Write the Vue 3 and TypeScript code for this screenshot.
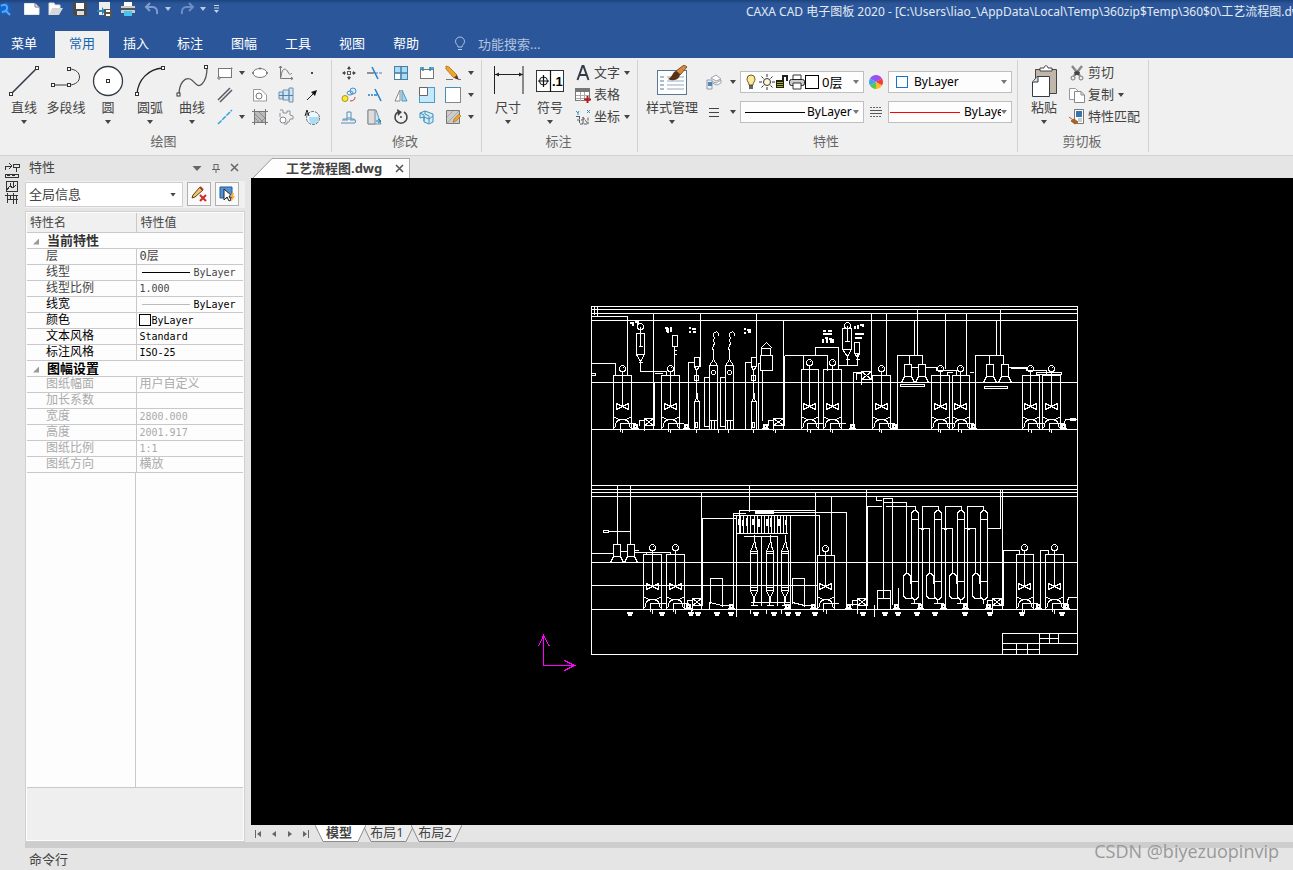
<script setup lang="ts">
import { ref } from 'vue'

interface Tool { icon: string; label: string; menu?: boolean }
interface Row { name: string; value: string; line?: string; swatch?: boolean; dark?: boolean }
interface Section { title: string; kind: string; rows: Row[] }

const menus = ['菜单', '常用', '插入', '标注', '图幅', '工具', '视图', '帮助']
const activeMenu = ref('常用')
const query = ref('')

const s = 'fill="none" stroke="#555b63"'
const b = 'fill="none" stroke="#4a90c8"'
const node = (x: number, y: number) =>
  `<rect x="${x - 1.5}" y="${y - 1.5}" width="3" height="3" fill="#fff" stroke="#333"/>`

const icons: Record<string, string> = {
  line: `<path d="M3 29 29 3" fill="none" stroke="#333b46" stroke-width="1.6"/>${node(3, 29)}${node(29, 3)}`,
  polyline: `<path d="M3 20h16M19 20c14 0 14-16 0-16" fill="none" stroke="#333b46"/>${node(3, 20)}${node(19, 20)}${node(19, 4)}`,
  circle: `<circle cx="16" cy="16" r="14.5" fill="#fff" stroke="#333b46" stroke-width="1.3"/>${node(16, 16)}`,
  arc: `<path d="M3 29C4 15 14 4 29 3" fill="none" stroke="#222" stroke-width="1.3"/>${node(3, 29)}${node(29, 3)}`,
  curve: `<path d="M3 30C3 18 9 12 14 14S21 24 26 19C29 16 31 10 31 3" fill="none" stroke="#555" stroke-width="1.3"/>${node(2.5, 29.5)}${node(30, 2)}`,
  rect: `<rect x="1.500" y="3.500" width="13" height="9" fill="#fff" stroke="#777"/><path d="M1 12h2v2H1zM14 3h1v1h-1z" fill="#fff" stroke="#777"/>`,
  ellipse: `<ellipse cx="8" cy="8" rx="7" ry="4.500" fill="#fff" stroke="#777"/><path d="M8 2.500v2M1 7v2M15 7v2" stroke="#555"/>`,
  func: `<path d="M2.500 1v12.500H15M1 3l1.500-2L4 3M13 12l2 1.500-2 1.500M3 12c1-10 5-9 7-5s3 2 4 1" fill="none" stroke="#777"/>`,
  dot: `<rect x="7" y="7" width="2" height="2" fill="#444"/>`,
  parallel: `<path d="M1 13 13 1M3 15 15 3" ${s} stroke-width="1.500"/>`,
  shape: `<path d="M1.500 14V2.500H9L14.500 8v6z" fill="#fff" stroke="#999"/><circle cx="7" cy="9" r="3" fill="none" stroke="#777"/>`,
  shaft: `<path d="M1 5h4v7H1zM5 3h6v10H5zM11 1h4v14h-4z" fill="#cfe5f4" stroke="#7390a8"/><path d="M1 8.500h14" stroke="#4b82b0"/>`,
  arrow: `<path d="M3 13 9 7" stroke="#222"/><path d="M13 3 11 9 7 5z" fill="#111"/>`,
  ray: `<path d="M1 15 15 1" stroke="#2fa3df" stroke-width="1.500" stroke-dasharray="5 1"/>`,
  hatch: `<rect x="3" y="3" width="10" height="10" fill="#bbb"/><path d="M0 2.500h16M0 13.500h16M2.500 0v16M13.500 0v16" fill="none" stroke="#777"/><path d="m3 5 8 8M3 9l4 4M7 3l6 6M9 13l4-4" stroke="#8c8c8c"/>`,
  gear: `<path d="M2 1h3v3h4V2h3v4l3 1v3h-3l-1 3H9v2H6M2 4v4" fill="none" stroke="#8b929a"/><circle cx="5" cy="11" r="3" fill="#fff" stroke="#888"/>`,
  region: `<circle cx="9" cy="9" r="6.500" fill="#eef7fb" stroke="#667" stroke-dasharray="3 1"/><path d="M5 8h10c0 5-3 7-6 7-3 0-4-3-4-7z" fill="#aadcf4"/><path d="M1 7 3 1l2 6M2 5h3" fill="none" stroke="#222"/>`,
  move: `<rect x="6.500" y="6.500" width="3" height="3" ${s}/><path d="M8 2v3M8 11v3M2 8h3M11 8h3" stroke="#444"/><path d="m6 4 2-3 2 3zM6 12l2 3 2-3zM4 6 1 8l3 2zM12 6l3 2-3 2z" fill="#444"/>`,
  trim: `<path d="M0 8h7" stroke="#333"/><path d="M8 8h8" stroke="#3b82cf" stroke-dasharray="3 1"/><path d="M5 2l6 12" stroke="#2183d0" stroke-width="1.500"/>`,
  array: `<rect x="1.500" y="1.500" width="13" height="13" fill="#a9dcf5" stroke="#4a7ea3"/><path d="M2 9h5v5H2z" fill="#fff"/><path d="M8 1v14M1 8h14" stroke="#4a7ea3" stroke-width="1.500"/>`,
  stretch: `<rect x="1.500" y="4.500" width="13" height="9" fill="#fff" stroke="#777"/><path d="M4 2v4M11 2v4M1 3h3M11 3h4" stroke="#258bcc" stroke-width="1.500"/>`,
  erase: `<path d="m1 1 3 1 8 8-3 3-8-9z" fill="#eda52c" stroke="#c37c20"/><path d="m9 13 3-3 2 5z" fill="#533"/><path d="M1 14.500h7M13 14.500h3" stroke="#777"/>`,
  copyobj: `<circle cx="4" cy="11.500" r="3" fill="#fce92c" stroke="#aa9420"/><circle cx="12" cy="4" r="3" fill="#d9eefa" stroke="#4a90c8"/><ellipse cx="9" cy="6" rx="3" ry="2" ${b}/><path d="M9 14q5 0 5-4" fill="none" stroke="#b44"/>`,
  extend: `<path d="M1 8h2M4 8h2M7 8h3" stroke="#2380c9" stroke-width="1.500"/><path d="m8 2 6 12" stroke="#2380c9" stroke-width="1.500"/>`,
  mirror: `<path d="M7 3v11H2z" fill="#fff" stroke="#888"/><path d="M9 3v11h5z" fill="#a6d6ed" stroke="#4b99c7"/>`,
  scale: `<rect x=".5" y=".5" width="15" height="15" fill="#c3e9fa" stroke="#4c9bc8"/><path d="M.500.500h8v8h-8z" fill="#fff" stroke="#666"/>`,
  select: `<rect x=".5" y=".5" width="15" height="15" fill="#fff" stroke="#888"/><path d="M.500 15V.500H15" fill="none" stroke="#2e92d1" stroke-dasharray="3 1"/>`,
  offset: `<path d="M0 14h14q2-3-1-4h-3V3H6v7H2M1 11h6V8M9 8v3h5" fill="none" stroke="#5290b8"/>`,
  shear: `<path d="M1 15V1h8l5 14z" fill="#c5e8f7" stroke="#7390a8"/><path d="M1 1h7v14H1z" fill="#ddd" stroke="#888"/><path d="M9 12h4M11 10l3 2-3 2" stroke="#267fb3" fill="none"/>`,
  rotate: `<path d="M5 3a6 6 0 1 0 6 0" fill="none" stroke="#444" stroke-width="1.600"/><path d="m4 0 5 3-4 4z" fill="#444"/><circle cx="8" cy="8" r="1" fill="#444"/>`,
  solid: `<path d="M1 4l5-2 8 3v8l-4 2-5-2V8L1 9zM5 8l5 2 4-3M6 2v3l4 2v7M1 4l4 2v6" fill="#d5ecf7" stroke="#3e91bf"/>`,
  hatchedit: `<path d="M1.500 1.500h13v13h-13z" fill="#ccc" stroke="#777"/><path d="m2 8 6-6M2 14 14 2M8 14l6-6" stroke="#aaa"/><path d="m9 10 5-5 2 2-5 5-3 1z" fill="#eda52c" stroke="#975a12" stroke-width=".5"/>`,
  dim: `<path d="M2.500 1v28M31 1v28M3 9.500h28" stroke="#222" fill="none"/><path d="m3 9.500 4-2v4zM31 9.500l-4-2v4z" fill="#222"/>`,
  symbol: `<rect x="2.500" y="5.500" width="27" height="21" fill="#fff" stroke="#333"/><path d="M16.500 5v22M4 16h11M9.500 10v12" stroke="#111" stroke-width="1.200"/><circle cx="9.500" cy="16" r="4" fill="none" stroke="#111"/><text x="18" y="21" font-family="Liberation Sans" font-weight="bold" font-size="13">.1</text>`,
  atext: `<path d="m2.500 15 5-14h1l5 14M4 10h8" fill="none" stroke="#333b46" stroke-width="2"/>`,
  table: `<rect x=".5" y="1.500" width="14" height="12" fill="#fff" stroke="#777"/><path d="M0 1h15v4H0z" fill="#777"/><path d="M1 8.500h13M1 11.500h13M5.500 5v9M9.500 5v9" stroke="#aaa"/><path d="M12.500 9v7M9 12.500h7" stroke="#b01e25" stroke-width="2"/>`,
  coord: `<path d="M1 7.500h4M4.500 7v8M2 11h7M8 8v7M5 15h7M8 8l5 7V8" ${s} stroke-dasharray="3 1"/><path d="m1 2 2 2 1-2M3 4v2M12 1l3 3m0-3-3 3" stroke="#3591cc" fill="none"/>`,
  style: `<rect x="1.500" y="5.500" width="29" height="24" fill="#fff" stroke="#5b7690"/><path d="M4 12h4M4 16h4M4 20h4M4 24h4" stroke="#567ca2"/><path d="M11 12h17M11 16h17M11 20h17M11 24h17" stroke="#94aac2"/><path d="M28 0 20 6l4 4 7-8z" fill="#d68a3f" stroke="#824c1b"/><path d="M20 6c-4 1-3 6-8 8 6 3 12 0 12-5z" fill="#563219"/>`,
  layers: `<path d="m5 4 5-3 5 4-5 2zM5 7l5 2 5-3v3l-4 2-5-2" fill="#fff" stroke="#9aa3ad"/><path d="M1 6h5v9H1z" fill="#eef3f7" stroke="#8d9aa8"/><path d="M2 8h4v4H2z" fill="#4d88b8"/>`,
  lineweight: `<path d="M3 4.500h10M3 8.500h10M3 12.500h10" stroke="#444" stroke-width="1"/>`,
  linetype: `<path d="M2 3.500h12M2 12.500h12" stroke="#666" stroke-dasharray="2 1"/><path d="M2 6.500h12M2 9.500h12" stroke="#555"/>`,
  wheel: `<path d="M8 8V1a7 7 0 0 1 6 3.500z" fill="#a14cf2"/><path d="m8 8 6-3.500a7 7 0 0 1 0 7z" fill="#f43b39"/><path d="m8 8 6 3.500A7 7 0 0 1 8 15z" fill="#ffb929"/><path d="M8 8v7a7 7 0 0 1-6-3.500z" fill="#56c84a"/><path d="m8 8-6 3.500a7 7 0 0 1 0-7z" fill="#3ea2ed"/><path d="M8 8 2 4.500A7 7 0 0 1 8 1z" fill="#8d58f2"/>`,
  bulb: `<path d="M4 5a4 4 0 1 1 8 0c0 3-2 3-2 6H6c0-3-2-3-2-6z" fill="#ffe99a" stroke="#6f5e28"/><path d="M6 12h4M6 14h4" stroke="#333" stroke-width="1.500"/>`,
  sun: `<circle cx="8" cy="8" r="3.500" fill="#fff8d8" stroke="#333"/><path d="M8 0v3M8 13v3M0 8h3M13 8h3M2.500 2.500l2 2M11.500 11.500l2 2M2.500 13.500l2-2M11.500 4.500l2-2" stroke="#333"/>`,
  lock: `<path d="M1 6h8v8H1z" fill="#222205"/><path d="M2 8.500h6M2 10.500h6M2 12.500h6" stroke="#aaa733"/><path d="M8 6V2h4v5" fill="none" stroke="#222" stroke-width="2"/>`,
  print: `<path d="M4 6V1h8v5" fill="#fff" stroke="#333"/><rect x=".5" y="5.500" width="15" height="6" rx="2" fill="#ccc" stroke="#222"/><path d="M4 9h8v6H4z" fill="#fff" stroke="#333"/>`,
  paste: `<path d="M7.500 4.500h21v24h-21z" fill="#c0b7aa" stroke="#444"/><path d="M12 6V3h4c0-3 4-3 4 0h4v3z" fill="#fff" stroke="#444"/><path d="M9 11.500h12.500v20h-17V17z" fill="#fff" stroke="#333b46"/><path d="M10 11.500V17H4.500" fill="#ddd" stroke="#333b46"/>`,
  cut: `<path d="M3 1 11 11M13 1 5 11" stroke="#888" stroke-width="2.500"/><path d="m5 7 3-1 3 1-1 3H6z" fill="#444"/><circle cx="4" cy="13" r="2" fill="#eee" stroke="#777"/><circle cx="12" cy="13" r="2" fill="#eee" stroke="#777"/>`,
  copy: `<path d="M.500 1.500h6l3 3v8h-9z" fill="#fff" stroke="#999"/><path d="M5.500 4.500H12l3.500 3.500v7.500h-10zM12 4.500V8h3.500" fill="#fff" stroke="#888"/>`,
  match: `<path d="M5.500.500h9v14h-9z" fill="#fff" stroke="#777"/><path d="M7 2h6v6H7z" fill="#3776ad"/><path d="M9 10h4M9 12h4" stroke="#999"/><path d="M0 8l4 3M2 12l3-2 4 3-3 2z" fill="#a46125" stroke="#a46125"/>`,
  newfile: `<path d="M.500 2.500H11l4 4v7H.500z" fill="#fff" stroke="#e6e6e6"/><path d="M11 2v4h5" fill="none" stroke="#778"/>`,
  open: `<path d="M1 14V2h5l1 2h5v3" fill="#fff" stroke="#ddd"/><path d="m1 14 3-7h11l-4 7z" fill="#d7d7d7"/>`,
  save: `<path d="M1 1h14v14H3l-2-2z" fill="#4a4a4a"/><path d="M4 2h8v6H4z" fill="#fff"/><path d="M5 10h7v4H5z" fill="#ddd"/>`,
  export: `<path d="M3 1h11v13H3z" fill="#eee"/><path d="M1 9h5V6l3 4-3 4v-3H1z" fill="#2785bf"/><path d="M8 8h8v8H8z" fill="#555"/><path d="M10 9h4v2h-4zM10 13h4v2h-4z" fill="#fff"/>`,
  printer: `<path d="M4 1h8v5H4z" fill="#fff"/><path d="M1 5h14v7H1z" fill="#ccc"/><path d="M1 8h14" stroke="#555" stroke-width="2"/><path d="M4 10h8v5H4z" fill="#46c4ee"/>`,
  undo: `<path d="M6 2 2 6l4 4M3 6h5q6 0 5 7" fill="none" stroke="#829dcd" stroke-width="2"/>`,
  redo: `<path d="m10 2 4 4-4 4M13 6H8q-6 0-5 7" fill="none" stroke="#6d8ec4" stroke-width="2"/>`,
  pencil: `<path d="m1 12 1-3 7-8 3 3-8 7z" fill="#f0c660" stroke="#554422"/><path d="m9 1 3 3" stroke="#a33" stroke-width="2"/><path d="m9 9 6 6M15 9l-6 6" stroke="#d22a22" stroke-width="2"/>`,
  pick: `<path d="M1 1h12v11H1z" fill="#4e93d6" stroke="#245a94"/><path d="M5 3v11l3-3 2 4 2-1-2-4h3z" fill="#fff" stroke="#222"/><path d="m13 7-2 4h2l-1 5 4-6h-2l1-3z" fill="#ffab32"/>`
}

const drawBig: Tool[] = [
  { icon: 'line', label: '直线', menu: true }, { icon: 'polyline', label: '多段线' },
  { icon: 'circle', label: '圆', menu: true }, { icon: 'arc', label: '圆弧', menu: true },
  { icon: 'curve', label: '曲线', menu: true }
]
const drawSmall: Tool[] = [
  { icon: 'rect', label: '矩形', menu: true }, { icon: 'ellipse', label: '椭圆' }, { icon: 'func', label: '公式曲线' }, { icon: 'dot', label: '点' },
  { icon: 'parallel', label: '平行线', menu: false }, { icon: 'shape', label: '轮廓' }, { icon: 'shaft', label: '孔轴' }, { icon: 'arrow', label: '箭头' },
  { icon: 'ray', label: '中心线', menu: true }, { icon: 'hatch', label: '剖面线' }, { icon: 'gear', label: '齿轮' }, { icon: 'region', label: '局部放大' }
]
const editSmall: Tool[] = [
  { icon: 'move', label: '平移' }, { icon: 'trim', label: '裁剪' }, { icon: 'array', label: '阵列' }, { icon: 'stretch', label: '拉伸' }, { icon: 'erase', label: '删除', menu: true },
  { icon: 'copyobj', label: '平移复制' }, { icon: 'extend', label: '延伸' }, { icon: 'mirror', label: '镜像' }, { icon: 'scale', label: '缩放' }, { icon: 'select', label: '打断', menu: true },
  { icon: 'offset', label: '等距线' }, { icon: 'shear', label: '过渡' }, { icon: 'rotate', label: '旋转' }, { icon: 'solid', label: '分解' }, { icon: 'hatchedit', label: '编辑填充', menu: true }
]
const dimBig: Tool[] = [{ icon: 'dim', label: '尺寸', menu: true }, { icon: 'symbol', label: '符号', menu: true }]
const dimSmall: Tool[] = [
  { icon: 'atext', label: '文字', menu: true }, { icon: 'table', label: '表格' }, { icon: 'coord', label: '坐标', menu: true }
]
const clipSmall: Tool[] = [
  { icon: 'cut', label: '剪切' }, { icon: 'copy', label: '复制', menu: true }, { icon: 'match', label: '特性匹配' }
]
const quick: Tool[] = [
  { icon: 'newfile', label: '新建' }, { icon: 'open', label: '打开' }, { icon: 'save', label: '保存' },
  { icon: 'export', label: '另存为' }, { icon: 'printer', label: '打印' }
]

const sections: Section[] = [
  {
    title: '当前特性', kind: 'current', rows: [
      { name: '层', value: '0层' },
      { name: '线型', value: 'ByLayer', line: 'solid' },
      { name: '线型比例', value: '1.000' },
      { name: '线宽', value: 'ByLayer', line: 'thin', dark: true },
      { name: '颜色', value: 'ByLayer', swatch: true, dark: true },
      { name: '文本风格', value: 'Standard', dark: true },
      { name: '标注风格', value: 'ISO-25', dark: true }
    ]
  },
  {
    title: '图幅设置', kind: 'sheet', rows: [
      { name: '图纸幅面', value: '用户自定义' }, { name: '加长系数', value: '' },
      { name: '宽度', value: '2800.000' }, { name: '高度', value: '2001.917' },
      { name: '图纸比例', value: '1:1' }, { name: '图纸方向', value: '横放' }
    ]
  }
]
const isLatin = (text: string) => /^[\w.:-]+$/.test(text)

// Process flow drawing, built from reusable equipment symbols.
const h = (y: number, x1: number, x2: number) => `M${x1} ${y}H${x2}`
const v = (x: number, y1: number, y2: number) => `M${x} ${y1}V${y2}`
const box = (x1: number, y1: number, x2: number, y2: number) => `M${x1} ${y1}H${x2}V${y2}H${x1}Z`
const ring = (x: number, y: number, r: number) => `M${x - r} ${y}a${r} ${r} 0 1 0 ${2 * r} 0a${r} ${r} 0 1 0 ${-2 * r} 0`
const tank = (x1: number, x2: number, top: number, base: number) => {
  const c = Math.floor((x1 + x2) / 2)
  const m = base - 23
  return `M${x1} ${base}V${top}H${x2}V${base}` + ring(c, top - 7, 3) + h(top - 8, c, c + 1) + v(c, top - 4, m) +
    `M${c - 6} ${m - 3}V${m + 3}L${c + 6} ${m - 3}V${m + 3}Z` +
    `M${x1} ${base - 13}L${x1 + 5} ${base - 10}H${x2 - 5}L${x2} ${base - 13}` +
    `M${x1 + 1} ${base - 1}L${x1 + 3} ${base - 8}L${x1 + 7} ${base - 10}M${x2 - 1} ${base - 1}L${x2 - 3} ${base - 8}L${x2 - 7} ${base - 10}` +
    `M${c - 2} ${base + 2}V${base - 6}H${x2 + 4}`
}
const pump = (x: number, base: number) =>
  `M${x - 3} ${base}L${x - 1} ${base - 4}H${x + 1}L${x + 3} ${base}` + box(x - 2, base - 5, x + 2, base - 2) + h(base - 1, x - 3, x + 3)
const exchanger = (x1: number, y1: number, x2: number, y2: number) =>
  box(x1, y1, x2, y2) + `M${x1} ${y1}L${x2} ${y2}M${x2} ${y1}L${x1} ${y2}` + `M${x1} ${y2}V${y2 + 5}M${x1} ${y1 + 2}H${x1 - 5}V${y2}`
const hopper = (x: number, y: number) =>
  box(x, y, x + 7, y + 12) + `M${x} ${y + 12}L${x - 3} ${y + 18}M${x + 7} ${y + 12}L${x + 10} ${y + 18}`
const doser = (x: number) =>
  box(x, 357, x + 5, 366) + `M${x} 366L${x + 2} 370L${x + 5} 366` + v(x + 2, 370, 398) + box(x, 375, x + 4, 380) +
  `M${x} 429V401L${x + 2} 398L${x + 5} 401V429` + v(x + 3, 392, 398) + h(401, x, x + 5) + box(x + 1, 422, x + 3, 427) +
  `M${x} 362H${x - 6}V429` + v(x + 2, 429, 432)
const tower = (x: number) =>
  `M${x} 429V365H${x + 8}V429M${x} 365L${x + 4} 359L${x + 8} 365` + ring(x + 4, 372, 2) +
  `M${x + 4} 359V350l-1-2 1-3 1-2-1-3 1-3-1-1c0-6 5-6 5-1` + `M${x} 420H${x + 8}M${x + 2} 420V428M${x + 5} 420V428` +
  `M${x} 377H${x - 5}V426H${x}`
const evaporator = (x: number) =>
  `M${x} 595V514c0-5 7-5 7 0V595c0 5-7 5-7 0M${x} 519H${x + 7}M${x} 581H${x + 7}` +
  `M${x - 1} 583V577c0-5-7-5-7 0V595q1 3 4 3H${x}V588` + v(x + 3, 599, 603) + h(603, x - 1, x + 9) +
  `M${x + 7} 528H${x + 18}V573` + h(529, x + 9, x + 12)
const column = (x: number) =>
  box(x, 551, x + 7, 587) + h(553, x, x + 7) + `M${x} 551L${x + 4} 541V534M${x + 7} 551L${x + 4} 541M${x + 5} 541V547` +
  `M${x} 587V590L${x + 3} 597V605M${x + 7} 587V590L${x + 4} 597V602` + h(590, x, x + 7) + h(605, x, x + 7)

const each = (items: number[], draw: (x: number) => string) => items.map(draw).join('')

const flow = [
  box(591, 306, 1077, 654),
  each([309, 313, 320, 382, 429, 485, 489, 492, 496, 562, 609], y => h(y, 591, 1077)),
  h(585, 591, 817), v(597, 306, 316), v(594, 306, 314), h(316, 591, 627), v(627, 316, 375),
  v(653, 313, 429), v(654, 382, 425), v(700, 313, 366), v(756, 313, 366), v(783, 320, 429), v(784, 355, 425),
  v(871, 313, 375), v(886, 313, 375), v(917, 309, 355), v(914, 320, 355), v(945, 313, 368), v(966, 313, 375),
  v(1000, 309, 355), v(996, 320, 355), 'M591 363H615V375', box(591, 373, 595, 375),
  tank(613, 631, 375, 429), tank(661, 679, 375, 429), tank(801, 818, 369, 429), tank(823, 841, 369, 429),
  tank(872, 890, 375, 429), tank(931, 949, 375, 429), tank(952, 969, 375, 429), tank(1022, 1039, 375, 429), tank(1042, 1060, 375, 429),
  each([635, 686, 765, 852, 894, 973, 1063], x => pump(x, 429)),
  exchanger(644, 418, 653, 425), exchanger(773, 418, 783, 425), exchanger(861, 371, 871, 379),
  box(636, 333, 644, 354), ring(640, 326, 3), v(640, 326, 346), h(346, 638, 642), 'M636 354L640 361L644 354M640 359V371H666V375M654 373H662M638 362H642',
  box(672, 335, 677, 346), v(674, 346, 375), h(350, 673, 676), h(354, 673, 676),
  doser(694), doser(751), tower(709), tower(725),
  box(760, 355, 772, 370), box(761, 348, 770, 355), 'M760 348L766 342L772 348M758 429V363H760M762 370V420',
  'M784 355H827V370M803 355V369M815 355V347H838V369',
  box(842, 328, 851, 349), ring(847, 325, 3), v(847, 325, 341), h(341, 844, 849), 'M842 349L847 356L851 349M847 354V365M838 365H857V353M854 342H859V353H854ZM854 353L857 357L859 353M845 359H849M855 359H859',
  'M861 372H853V425', 'M897 429V355H922V364M909 355V364', hopper(904, 364), hopper(918, 364), box(900, 384, 924, 386),
  'M911 367H918M925 367H936V370H956V375M947 375V372H952M969 372H973',
  'M975 429V355H1003V364M989 355V364', hopper(986, 364), hopper(1001, 364), box(984, 386, 1007, 388),
  'M1008 367H1026V370H1046V373M1010 368H1026', box(1036, 372, 1061, 374), 'M1063 425L1065 419H1077', box(1070, 418, 1075, 420),

  v(617, 485, 544), v(630, 485, 544), h(531, 608, 630), box(603, 530, 608, 532), hopper(613, 544), hopper(627, 544),
  'M591 553H613M620 551H627M634 552H670V554M634 550H638M646 552V554',
  v(701, 492, 609), 'M702 605V518H736', v(749, 485, 511), v(815, 492, 605), v(831, 496, 555),
  tank(643, 661, 554, 609), tank(666, 684, 554, 609), tank(817, 834, 555, 609), tank(1016, 1033, 554, 609), tank(1045, 1063, 554, 609),
  each([688, 731, 787, 813, 848, 896, 920, 943, 965, 988, 1038, 1066], x => pump(x, 609)),
  exchanger(692, 598, 701, 605), exchanger(857, 598, 866, 605), exchanger(992, 598, 1001, 605),
  'M710 603V578H722V606M709 609V602L722 605H729V609', 'M792 603V578H804V606M792 602L804 605H811',
  'M739 533V510H815M733 609V513H745M773 512H846V605M733 515H819V555', v(736, 515, 616), v(790, 515, 609),
  each([740, 743, 747, 750, 754, 757, 761, 764, 768, 771, 774, 777, 780, 783, 786], x => v(x, 515, 533)),
  h(533, 736, 787), h(536, 743, 777), v(761, 536, 605), v(777, 536, 605),
  column(750), column(766), column(781), h(602, 750, 790),
  v(866, 489, 609), 'M867 605V506H881M876 496V500H881M883 598V498H892V604M883 502H906V573M885 506H915V510',
  'M922 605V506H938V510M945 605V506H961V510M967 605V506H983V510M987 528H1000V489', v(1002, 489, 609),
  evaporator(911), evaporator(934), evaporator(957), 'M980 595V514c0-5 7-5 7 0V595c0 5-7 5-7 0M980 519H987M980 581H987M979 583V577c0-5-7-5-7 0V595q1 3 4 3H980V588M983 599V603',
  box(877, 590, 890, 609), h(598, 877, 890), v(874, 604, 616), v(898, 587, 605), h(604, 848, 857),
  'M1003 605V550H1019V554M1040 605V550H1048V554M1066 605L1068 597H1077',
  box(1002, 633, 1077, 654), h(643, 1002, 1077), v(1039, 633, 654), v(1049, 633, 643), v(1058, 633, 643),
  h(638, 1039, 1058), h(649, 1002, 1039), v(1016, 643, 654), v(1027, 643, 654),
  each([622, 670, 696, 718, 728, 753, 775, 810, 832, 881, 940, 961, 1031, 1051], x => v(x, 429, 432)),
  each([652, 675, 691, 750, 766, 781, 826, 857, 992, 1024, 1054], x => v(x, 609, 613))
].join('')

const noteMarks = [
  'M629 322h2M632 321v4M634 321h3v3M664 327h2v4M667 327v5M669 327h1v4',
  'M688 327h2M691 328h4M688 331h2M692 331h3M743 328h2M746 329h4M743 332h2M747 331h3',
  'M822 330h3M827 330h4M822 333h9M822 338v4M824 337h2v5M828 338h2v4M832 338v4',
  'M854 325v3M857 324v4M859 324h3v2M854 333h9M854 337h7M738 518v6M742 519v6M746 517v8M752 518v6M758 518v8M766 518v7M770 517v9M778 518v7M785 519v5',
  ...[627, 659, 688, 695, 714, 728, 753, 771, 785, 795, 812, 860, 882, 895, 914, 932, 962, 987, 1019, 1059].map(x => `M${x - 1} 612h6M${x} 614h4`)
].join('')

const sheets = ['模型', '布局1', '布局2']
const activeSheet = ref('模型')
</script>

<template>
  <div class="app">
    <header class="title-bar">
      <div class="quick">
        <svg class="logo" width="12" height="16" viewBox="0 0 12 16"><path d="M0 3l3 1 4-3 2 3 2 5-2 1 2 4-4-2-4 2-3-2z" fill="#1267ce" /><path d="M1 5q5-3 6 1t-5 5M5 9l5 5" fill="none" stroke="#57a7fa" stroke-width="2" /></svg>
        <button v-for="q in quick" :key="q.icon" class="quick-btn" :aria-label="q.label"><svg width="16" height="16" viewBox="0 0 16 16" v-html="icons[q.icon]" /></button>
        <button class="undo-btn" aria-label="撤销"><svg width="16" height="16" viewBox="0 0 16 16" v-html="icons.undo" /><i class="caret" /></button>
        <button class="undo-btn" aria-label="恢复"><svg width="16" height="16" viewBox="0 0 16 16" v-html="icons.redo" /><i class="caret" /></button>
        <button class="more-btn" aria-label="自定义快速启动"><svg width="7" height="8" viewBox="0 0 7 8"><path d="M1 .5h5M1 3h5" stroke="#c9d3e6" /><path d="M1 5h5L3.500 8z" fill="#c9d3e6" /></svg></button>
      </div>
      <h1>CAXA CAD 电子图板 2020 - [C:\Users\liao_\AppData\Local\Temp\360zip$Temp\360$0\工艺流程图.dwg]</h1>
    </header>

    <nav class="menu">
      <button v-for="m in menus" :key="m" :class="{ active: m === activeMenu }" @click="activeMenu = m">{{ m }}</button>
      <label class="search">
        <svg width="12" height="16" viewBox="0 0 12 16"><path d="M4 11c0-2-2.500-3-2.500-5.500a4.500 4.500 0 0 1 9 0C10.500 8 8 9 8 11zM4 13.500h4" fill="none" stroke="#b4c3df" /></svg>
        <input v-model="query" type="text" placeholder="功能搜索..." aria-label="功能搜索">
      </label>
    </nav>

    <section class="ribbon">
      <div class="group draw">
        <div class="tools">
          <button v-for="t in drawBig" :key="t.icon" class="big"><svg width="32" height="32" viewBox="0 0 32 32" v-html="icons[t.icon]" /><span>{{ t.label }}</span><i v-if="t.menu" class="caret" /></button>
          <div class="small-grid draw-grid">
            <template v-for="(t, i) in drawSmall" :key="t.icon">
              <button class="small" :aria-label="t.label"><svg width="16" height="16" viewBox="0 0 16 16" v-html="icons[t.icon]" /></button>
              <span v-if="i % 4 === 0" class="drop"><i v-if="t.menu" class="caret" /></span>
            </template>
          </div>
        </div>
        <h2>绘图</h2>
      </div>
      <div class="group edit">
        <div class="tools">
          <div class="small-grid edit-grid">
            <template v-for="t in editSmall" :key="t.icon">
              <button class="small" :aria-label="t.label"><svg width="16" height="16" viewBox="0 0 16 16" v-html="icons[t.icon]" /></button>
              <span v-if="t.menu" class="drop"><i class="caret" /></span>
            </template>
          </div>
        </div>
        <h2>修改</h2>
      </div>
      <div class="group annotate">
        <div class="tools">
          <button v-for="t in dimBig" :key="t.icon" class="big"><svg width="32" height="32" viewBox="0 0 32 32" v-html="icons[t.icon]" /><span>{{ t.label }}</span><i class="caret" /></button>
          <div class="list">
            <button v-for="t in dimSmall" :key="t.icon"><svg width="16" height="16" viewBox="0 0 16 16" v-html="icons[t.icon]" /><span>{{ t.label }}</span><i v-if="t.menu" class="caret" /></button>
          </div>
        </div>
        <h2>标注</h2>
      </div>
      <div class="group props">
        <div class="tools">
          <button class="big wide"><svg width="32" height="32" viewBox="0 0 32 32" v-html="icons.style" /><span>样式管理</span><i class="caret" /></button>
          <div class="combos">
            <button class="pair" aria-label="图层"><svg width="16" height="16" viewBox="0 0 16 16" v-html="icons.layers" /><i class="caret" /></button>
            <div class="combo layer">
              <svg width="16" height="16" viewBox="0 0 16 16" v-html="icons.bulb" />
              <svg width="16" height="16" viewBox="0 0 16 16" v-html="icons.sun" />
              <svg width="14" height="16" viewBox="0 0 14 16" v-html="icons.lock" />
              <svg width="16" height="16" viewBox="0 0 16 16" v-html="icons.print" />
              <i class="swatch" />
              <select aria-label="当前图层"><option>0层</option></select><i class="caret" />
            </div>
            <svg width="16" height="16" viewBox="0 0 16 16" v-html="icons.wheel" />
            <div class="combo color"><i class="swatch blue" /><select aria-label="颜色"><option>ByLayer</option></select><i class="caret" /></div>
            <button class="pair" aria-label="线宽设置"><svg width="16" height="16" viewBox="0 0 16 16" v-html="icons.lineweight" /><i class="caret" /></button>
            <div class="combo"><i class="sample" /><select aria-label="线宽"><option>ByLayer</option></select><i class="caret" /></div>
            <svg width="16" height="16" viewBox="0 0 16 16" v-html="icons.linetype" />
            <div class="combo type"><i class="sample red" /><select aria-label="线型"><option>ByLayer</option></select><i class="caret" /></div>
          </div>
        </div>
        <h2>特性</h2>
      </div>
      <div class="group clip">
        <div class="tools">
          <button class="big"><svg width="32" height="32" viewBox="0 0 32 32" v-html="icons.paste" /><span>粘贴</span><i class="caret" /></button>
          <div class="list">
            <button v-for="t in clipSmall" :key="t.icon"><svg width="16" height="16" viewBox="0 0 16 16" v-html="icons[t.icon]" /><span>{{ t.label }}</span><i v-if="t.menu" class="caret" /></button>
          </div>
        </div>
        <h2>剪切板</h2>
      </div>
    </section>

    <div class="body">
      <aside class="rail">
        <button aria-label="图库">
          <svg width="16" height="44" viewBox="0 0 16 44"><path d="M1 8V4h6M5 1l3 3-3 3M9 2h6v3H9zM12 5v5M1 12h13v3H1zM3 13.500h3M8 13.500h3M2 19h11v10H2zM3 28l3-4v-3M6 24l3 2M9 20v6l3-3M1 33h13M3 31v10M6 33v4H3M9 31v11M12 33v9M6 37h8" fill="none" stroke="#333" shape-rendering="crispEdges" /></svg>
        </button>
      </aside>
      <div class="content">
        <div class="workspace">
          <aside class="panel">
            <div class="panel-head">
              <h2>特性</h2>
              <button aria-label="菜单"><svg width="10" height="10" viewBox="0 0 10 10"><path d="M.500 3h9L5 8z" fill="#666" /></svg></button>
              <button aria-label="固定"><svg width="10" height="10" viewBox="0 0 10 10"><path d="M3 1v5M7 1v5M3 1.500h4M1 6.500h8M5 7v3" fill="none" stroke="#666" /></svg></button>
              <button aria-label="关闭"><svg width="10" height="10" viewBox="0 0 10 10"><path d="m1 1 7 7M8 1 1 8" stroke="#666" stroke-width="1.500" /></svg></button>
            </div>
            <div class="filter">
              <div class="filter-select"><select aria-label="选择对象"><option>全局信息</option></select><i class="caret" /></div>
              <button aria-label="清除选择"><svg width="16" height="16" viewBox="0 0 16 16" v-html="icons.pencil" /></button>
              <button aria-label="快速选择"><svg width="16" height="16" viewBox="0 0 16 16" v-html="icons.pick" /></button>
            </div>
            <div class="grid-box">
              <table>
                <thead><tr><th>特性名</th><th>特性值</th></tr></thead>
                <tbody v-for="g in sections" :key="g.kind" :class="g.kind">
                  <tr class="section"><th colspan="2"><span class="fold" />{{ g.title }}</th></tr>
                  <tr v-for="r in g.rows" :key="r.name" :class="{ dark: r.dark }">
                    <td>{{ r.name }}</td>
                    <td><div class="cell" :class="{ latin: isLatin(r.value) }"><i v-if="r.line" class="stroke" :class="r.line" /><i v-if="r.swatch" class="chip" />{{ r.value }}</div></td>
                  </tr>
                </tbody>
              </table>
              <div class="blank" />
              <div class="hint" />
            </div>
          </aside>

          <main class="document">
            <div class="doc-tabs">
              <div class="doc-tab">
                <svg width="20" height="20" viewBox="0 0 20 20"><path d="M0 20 19 .5h1V20z" fill="#fdfdfd" /><path d="M0 20 19 .5h1" fill="none" stroke="#9a9a9a" /></svg>
                <button class="doc-name">工艺流程图.dwg</button>
                <button class="close" aria-label="关闭"><svg width="9" height="9" viewBox="0 0 9 9"><path d="m1 1 7 7M8 1 1 8" stroke="#555" stroke-width="1.500" /></svg></button>
              </div>
            </div>
            <div class="canvas">
              <svg viewBox="251 178 1042 647" preserveAspectRatio="xMidYMid meet" role="img" aria-label="工艺流程图">
                <g transform="translate(.5 .5)" fill="none" shape-rendering="crispEdges">
                  <path :d="flow" stroke="#fff" />
                  <path :d="noteMarks" stroke="#fff" stroke-width="2" />
                  <path d="M754 512H773" stroke="#fff" stroke-width="3" />
                  <path d="M543 665V635M538 646 543 635 549 646M543 665H574M564 660 574 665 564 670" stroke="#f0f" />
                </g>
              </svg>
            </div>
            <div class="sheet-bar">
              <button class="step" aria-label="第一页"><svg width="8" height="8" viewBox="0 0 8 8"><path d="M1 0h1v8H1zM7 1v6L3 4z" fill="#666" /></svg></button>
              <button class="step" aria-label="上一页"><svg width="8" height="8" viewBox="0 0 8 8"><path d="M6 1v6L2 4z" fill="#666" /></svg></button>
              <button class="step" aria-label="下一页"><svg width="8" height="8" viewBox="0 0 8 8"><path d="M2 1v6l4-3z" fill="#666" /></svg></button>
              <button class="step" aria-label="最后一页"><svg width="8" height="8" viewBox="0 0 8 8"><path d="M6 0h1v8H6zM1 1v6l4-3z" fill="#666" /></svg></button>
              <div class="sheets">
                <button v-for="sh in sheets" :key="sh" :class="{ active: sh === activeSheet }" @click="activeSheet = sh">
                  <svg width="51" height="17" viewBox="0 0 51 17"><path d="M0 0 8 16.500H43L51 0" :fill="sh === activeSheet ? '#fff' : '#ececec'" stroke="#8c8c8c" /></svg>
                  <span>{{ sh }}</span>
                </button>
              </div>
            </div>
          </main>
        </div>
        <footer>命令行</footer>
      </div>
    </div>
    <p class="watermark">CSDN @biyezuopinvip</p>
  </div>
</template>

<style>
body { margin: 0; }
</style>

<style scoped>
* { box-sizing: border-box; }
.app {
  position: relative; display: flex; flex-direction: column; min-height: 100vh; overflow: hidden;
  background: #e5e5e5; color: #444; font: 13px/20px "Noto Sans", "Noto Sans CJK SC", sans-serif;
}
h1, h2, p { margin: 0; font-size: inherit; font-weight: normal; }
button { display: flex; align-items: center; justify-content: center; padding: 0; border: 0; background: none; color: inherit; font: inherit; }
svg { display: block; flex: none; }
select, input { min-width: 0; padding: 0; border: 0; outline: 0; appearance: none; background: none; color: inherit; font: inherit; }
.caret { flex: none; width: 6px; height: 4px; background: #444; clip-path: polygon(0 0, 100% 0, 50% 100%); }

.title-bar { display: flex; align-items: flex-start; height: 31px; background: linear-gradient(#1d437e, #2b579a 4px); color: #e3e9f3; }
.quick { display: flex; align-items: center; flex: none; width: 226px; height: 18px; }
.logo { margin-right: 8px; }
.quick-btn { width: 24px; height: 16px; }
.undo-btn { width: 35px; height: 16px; gap: 5px; }
.undo-btn .caret { background: #b9c8e1; }
.more-btn { width: 12px; height: 16px; }
.title-bar h1 { margin-left: 520px; padding-top: 2px; font-size: 12px; white-space: nowrap; }

.menu { display: flex; height: 27px; padding-right: 20px; background: #2b579a; color: #fff; }
.menu button { flex: none; width: 54px; padding-bottom: 3px; }
.menu > button:first-child { width: 55px; padding-right: 7px; }
.menu button.active { background: #f0f0f0; color: #1565b5; }
.search { display: flex; align-items: center; gap: 12px; margin-left: 21px; padding-bottom: 2px; }
.search input { width: 120px; }
.search input::placeholder { color: #b4c3df; opacity: 1; }

.ribbon { display: flex; height: 98px; border-bottom: 1px solid #d2d2d2; background: #f0f0f0; }
.group { position: relative; flex: none; padding-top: 4px; }
.group::after { content: ""; position: absolute; top: 2px; right: 0; bottom: 3px; width: 1px; background: #d2d2d2; }
.group h2 { padding: 3px 8px 0 0; text-align: center; color: #666; }
.draw { width: 332px; padding-left: 3px; }
.edit { width: 150px; padding-left: 4px; }
.annotate { width: 156px; padding-left: 5px; }
.props { width: 380px; padding-left: 4px; }
.clip { width: 131px; padding-left: 5px; }
.tools { display: flex; height: 66px; }
.big { flex-direction: column; justify-content: flex-start; flex: none; width: 42px; padding-top: 3px; white-space: nowrap; }
.big .caret { margin-top: 3px; }
.wide { width: 60px; }
.small-grid { display: grid; grid-template-rows: repeat(3, 22px); }
.draw-grid { grid-template-columns: 24px 10px 26px 26px 26px; }
.edit-grid { grid-template-columns: repeat(5, 26px) 10px; }
.drop { display: flex; align-items: center; justify-content: center; }
.list { display: flex; flex-direction: column; padding-left: 4px; }
.list button { justify-content: flex-start; gap: 3px; height: 22px; white-space: nowrap; }
.list span { padding-bottom: 2px; }
.list .caret { margin-left: 1px; }
.combos { display: grid; grid-template-columns: 30px 124px 16px 124px; grid-auto-rows: 22px; align-items: center; column-gap: 4px; row-gap: 8px; padding: 9px 0 0 4px; }
.pair { gap: 8px; }
.combo { display: flex; align-items: center; height: 22px; padding: 0 4px 0 2px; border: 1px solid #bfbfbf; background: #fdfdfd; color: #000; font-size: 12px; }
.combo select { flex: 1; }
.combo .caret { background: #777; }
.layer select { padding-left: 3px; font-size: 13px; }
.swatch { flex: none; width: 14px; height: 14px; border: 1px solid #000; background: #fff; }
.swatch.blue { width: 12px; height: 12px; margin: 0 6px 0 5px; border-color: #1a72c9; }
.sample { flex: none; width: 60px; height: 1px; margin: 0 2px 0 2px; background: #000; }
.sample.red { width: 70px; margin: 0 4px 0 0; background: #f00; }
.type { padding-left: 1px; }

.body { display: flex; flex: 1; }
.rail { flex: none; width: 25px; padding: 6px 0 0 4px; }
.content { display: flex; flex-direction: column; flex: 1; min-width: 0; }
.workspace { display: flex; flex: 1; border-bottom: 6px solid #cdcdcd; }
.panel { display: flex; flex-direction: column; flex: none; width: 226px; padding-right: 6px; }
.panel-head { display: flex; align-items: center; gap: 9px; height: 25px; padding: 0 5px 2px 4px; }
.panel-head h2 { flex: 1; padding-bottom: 2px; }
.filter { display: flex; height: 27px; gap: 3px; padding-right: 6px; margin-bottom: 3px; background: #f0f0f0; }
.filter-select { display: flex; flex: 1; align-items: center; margin: 1px 0; padding: 0 6px 0 3px; border: 1px solid #cfcfcf; background: #fff; }
.filter-select select { flex: 1; padding-bottom: 2px; }
.filter button { width: 24px; height: 24px; margin: 1px 0 0 1px; border: 1px solid #b0b0b0; background: #fafafa; }
.grid-box { display: flex; flex-direction: column; flex: 1; padding: 1px; border: 1px solid #d0d0d0; background: #fdfdfd; }
table { width: 100%; table-layout: fixed; border-collapse: collapse; font: 12px/15px "DejaVu Sans Mono", "Noto Sans CJK SC", monospace; }
th, td { height: 16px; padding: 0; border-bottom: 1px solid #c9c9c9; line-height: 15px; text-align: left; font-weight: normal; white-space: nowrap; }
td:first-child { width: 109px; padding-left: 19px; border-right: 1px solid #c9c9c9; }
thead th { height: 19px; padding: 2px 0 0 4px; background: #f0f0f0; }
thead th:first-child { width: 109px; padding-left: 3px; border-right: 1px solid #c9c9c9; }
.section th { color: #333; font-size: 13px; font-weight: bold; }
.sheet .section th { color: #000; }
.fold { display: inline-block; width: 6px; height: 6px; margin: 0 8px 0 6px; background: #999; clip-path: polygon(100% 0, 100% 100%, 0 100%); }
.cell { display: flex; align-items: center; height: 15px; padding-left: 3px; }
.cell.latin { font-size: 10px; }
.dark { color: #000; }
.sheet td { color: #aaa; }
.stroke { flex: none; width: 48px; height: 1px; margin: 0 4px 0 2px; background: #000; }
.stroke.thin { background: #bbb; }
.chip { flex: none; width: 12px; height: 12px; margin: 0 1px 0 -1px; border: 1px solid #000; }
.blank { flex: 1; width: 109px; border-right: 1px solid #c9c9c9; }
.hint { height: 53px; border-top: 1px solid #c9c9c9; background: #efefef; }

.document { display: flex; flex: 1; flex-direction: column; min-width: 0; }
.doc-tabs { display: flex; align-items: flex-end; height: 22px; }
.doc-tab { display: flex; height: 20px; padding-left: 2px; }
.doc-name { padding: 0 13px 2px 13px; border-top: 1px solid #aaa; background: #fdfdfd; font-weight: bold; font-size: 13px; line-height: 18px; }
.close { padding-right: 5px; border: solid #aaa; border-width: 1px 1px 0 0; background: #fdfdfd; }
.canvas { position: relative; flex: 1; min-height: 300px; background: #000; }
.canvas svg { position: absolute; inset: 0; width: 100%; height: 100%; }
.sheet-bar { display: flex; height: 17px; }
.step { width: 16px; padding-right: 2px; }
.sheets { display: flex; }
.sheets button { position: relative; width: 51px; margin-right: -3px; font-size: 13px; line-height: 16px; }
.sheets button svg { position: absolute; inset: 0; }
.sheets button span { position: relative; padding: 0 3px 3px 0; }
.sheets .active { z-index: 1; font-weight: bold; }
footer { height: 22px; padding-left: 4px; line-height: 22px; }
.watermark { position: absolute; right: 14px; bottom: 6px; color: #999; font: 18px/26px "Open Sans", "Noto Sans", sans-serif; }
</style>
